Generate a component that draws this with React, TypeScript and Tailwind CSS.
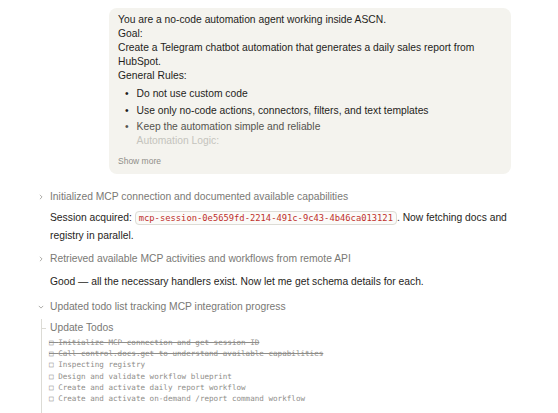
import React from "react";

const todos: { text: string; done: boolean }[] = [
  { text: "Initialize MCP connection and get session ID", done: true },
  { text: "Call control.docs.get to understand available capabilities", done: true },
  { text: "Inspecting registry", done: false },
  { text: "Design and validate workflow blueprint", done: false },
  { text: "Create and activate daily report workflow", done: false },
  { text: "Create and activate on-demand /report command workflow", done: false },
];

function Chevron({ open }: { open?: boolean }) {
  return (
    <svg
      width="8"
      height="8"
      viewBox="0 0 8 8"
      fill="none"
      stroke="#9a9994"
      strokeWidth="0.8"
      className="shrink-0"
    >
      {open ? <path d="M1.8 2.9 L4 5.1 L6.2 2.9" /> : <path d="M2.9 1.8 L5.1 4 L2.9 6.2" />}
    </svg>
  );
}

function StepHeader({ label, open }: { label: string; open?: boolean }) {
  return (
    <div className="flex items-center gap-[5px] pl-[37px] text-[10.3px] leading-[14px] text-[#7a7975]">
      <Chevron open={open} />
      <span>{label}</span>
    </div>
  );
}

export default function App() {
  return (
    <div
      className="h-[413px] w-[558px] overflow-hidden bg-white text-[#1f1e1b]"
      style={{ fontFamily: "'Liberation Sans', Arial, sans-serif" }}
    >
      <div className="ml-[109px] mt-[8px] w-[402px] rounded-[8px] bg-[#f4f3ee] px-[9px] pt-[5px] pb-[6px] text-[10.3px] leading-[14px]">
        <p>You are a no-code automation agent working inside ASCN.</p>
        <p>Goal:</p>
        <p>Create a Telegram chatbot automation that generates a daily sales report from HubSpot.</p>
        <p>General Rules:</p>
        <ul className="mt-[4px] flex flex-col gap-[2.5px] pl-[7px]">
          <li className="flex gap-[8px]">
            <span>•</span>
            <span>Do not use custom code</span>
          </li>
          <li className="flex gap-[8px]">
            <span>•</span>
            <span>Use only no-code actions, connectors, filters, and text templates</span>
          </li>
          <li className="flex gap-[8px] text-[#55544f]">
            <span>•</span>
            <div className="flex flex-col">
              <span>Keep the automation simple and reliable</span>
              <span className="text-[#c4c3bd]">Automation Logic:</span>
            </div>
          </li>
        </ul>
        <p className="mt-[6px] text-[8.5px] text-[#8f8e89]">Show more</p>
      </div>

      <div className="mt-[16px] flex flex-col">
        <StepHeader label="Initialized MCP connection and documented available capabilities" />
        <p className="mt-[5px] pl-[50px] pr-[20px] text-[10.3px] leading-[18px]">
          Session acquired:{" "}
          <code
            className="rounded-[4px] border border-[#dddcd6] bg-[#fbfbf9] px-[3px] py-px text-[8.8px] leading-[12px] text-[#c0302b]"
            style={{ fontFamily: "'DejaVu Sans Mono', monospace" }}
          >
            mcp-session-0e5659fd-2214-491c-9c43-4b46ca013121
          </code>
          . Now fetching docs and registry in parallel.
        </p>

        <div className="mt-[7px]">
          <StepHeader label="Retrieved available MCP activities and workflows from remote API" />
        </div>
        <p className="mt-[9px] pl-[50px] text-[10.3px] leading-[14px]">
          Good — all the necessary handlers exist. Now let me get schema details for each.
        </p>

        <div className="mt-[11px]">
          <StepHeader open label="Updated todo list tracking MCP integration progress" />
        </div>

        <div className="ml-[41px] mt-[5px] border-l border-[#dcdbd5] pb-[14px]">
          <div className="flex items-center pt-[2px]">
            <span className="h-px w-[4px] bg-[#dcdbd5]" />
            <span className="ml-[4px] text-[10.3px] leading-[14px] text-[#7a7975]">Update Todos</span>
          </div>
          <ul
            className="mt-[2px] flex flex-col pl-[7px] text-[7.6px] leading-[11.2px] text-[#8f8e8a]"
            style={{ fontFamily: "'DejaVu Sans Mono', monospace" }}
          >
            {todos.map((t) => (
              <li key={t.text} className={t.done ? "line-through" : ""}>
                □ {t.text}
              </li>
            ))}
          </ul>
        </div>
      </div>
    </div>
  );
}
